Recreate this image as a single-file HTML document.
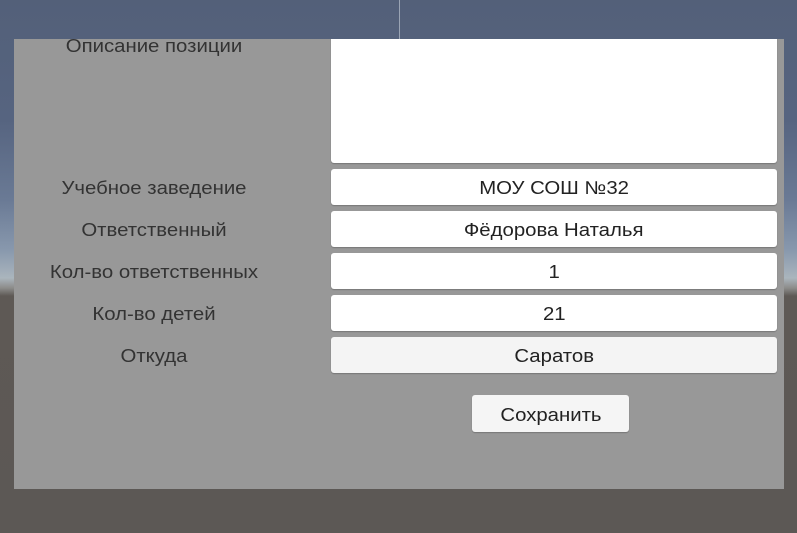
<!DOCTYPE html>
<html><head><meta charset="utf-8"><style>
html,body{margin:0;padding:0;width:797px;height:533px;overflow:hidden}
body{position:relative;font-family:"Liberation Sans",sans-serif;
background:linear-gradient(to bottom,#536079 0px,#566480 120px,#6a7a95 200px,#8898ad 250px,#aab5bd 278px,#8c8c8a 288px,#5e5955 296px,#5c5855 533px)}
.vl{position:absolute;left:399px;top:0;width:1px;height:39px;background:#9aa4b4}
.panel{position:absolute;left:14px;top:39px;width:770px;height:450px;background:#989898;overflow:hidden}
.lbl{position:absolute;left:0;width:280px;text-align:center;font-size:18.5px;color:#333;line-height:22px;transform:scaleX(1.1);transform-origin:140px 0}
.f{position:absolute;left:317px;width:446px;height:36px;background:#fff;border-radius:3px;box-shadow:0 1px 1px #777;text-align:center;color:#222;line-height:38px}
.f span,.btn span{display:inline-block;font-size:18.5px;transform:scaleX(1.1)}
.btn{position:absolute;left:458px;top:356px;width:157px;height:37px;background:#f5f5f5;border-radius:3px;box-shadow:0 1px 1px #777;text-align:center;color:#222;line-height:39px}
</style></head><body>
<div class="vl"></div>
<div class="panel">
<div class="lbl" style="top:-4px">Описание позиции</div>
<div class="f" style="top:-4px;height:128px"></div>
<div class="lbl" style="top:138px">Учебное заведение</div>
<div class="f" style="top:130px"><span>МОУ СОШ №32</span></div>
<div class="lbl" style="top:180px">Ответственный</div>
<div class="f" style="top:172px"><span>Фёдорова Наталья</span></div>
<div class="lbl" style="top:222px">Кол-во ответственных</div>
<div class="f" style="top:214px"><span>1</span></div>
<div class="lbl" style="top:264px">Кол-во детей</div>
<div class="f" style="top:256px"><span>21</span></div>
<div class="lbl" style="top:306px">Откуда</div>
<div class="f" style="top:298px;background:#f4f4f4"><span>Саратов</span></div>
<div class="btn"><span>Сохранить</span></div>
</div>
</body></html>
